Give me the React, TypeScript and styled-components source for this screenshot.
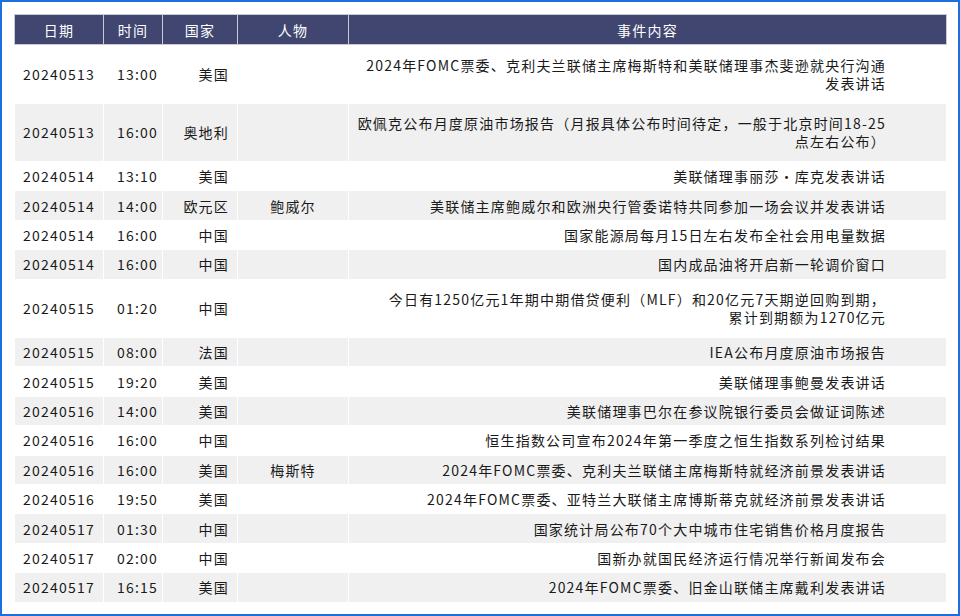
import React from "react";
import styled, { createGlobalStyle } from "styled-components";

const Global = createGlobalStyle`
  html, body { margin: 0; padding: 0; background: #fff; }
  body { font-family: "Noto Sans CJK SC", "Liberation Sans", sans-serif; }
`;

const Frame = styled.div`
  width: 960px;
  height: 616px;
  box-sizing: border-box;
  border: 2px solid #1c6fe0;
  padding: 12px 12px 0 12px;
  overflow: hidden;
`;

const Table = styled.table`
  width: 933px;
  border-collapse: collapse;
  table-layout: fixed;
  font-size: 14px;
  letter-spacing: 1.2px;
  color: #1a1a1a;
`;

const Th = styled.th<{ w?: number }>`
  background: #404670;
  color: #fff;
  font-weight: normal;
  height: 29px;
  padding: 0;
  border: 1px solid #c8cad6;
  text-align: center;
  ${(p) => (p.w ? `width: ${p.w}px;` : "")}
`;

const Tr = styled.tr<{ shade: boolean; tall?: boolean }>`
  background: ${(p) => (p.shade ? "#f0f0f0" : "#fff")};
  height: ${(p) => (p.tall ? "58.5px" : "29.4px")};
`;

const Td = styled.td<{ align: "left" | "center" | "right"; pr?: number }>`
  border: 1px solid #fff;
  padding: 0 ${(p) => p.pr ?? 0}px 0 0;
  text-align: ${(p) => p.align};
  vertical-align: middle;
  line-height: 18px;
  white-space: nowrap;
  overflow: hidden;
`;

const Event = styled.div`
  display: flex;
  justify-content: flex-end;
  padding-right: 60px;
`;

const EventText = styled.div`
  text-align: right;
  line-height: 18px;
`;

type Row = [string, string, string, string, string[]];

const rows: Row[] = [
  ["20240513", "13:00", "美国", "", ["2024年FOMC票委、克利夫兰联储主席梅斯特和美联储理事杰斐逊就央行沟通", "发表讲话"]],
  ["20240513", "16:00", "奥地利", "", ["欧佩克公布月度原油市场报告（月报具体公布时间待定，一般于北京时间18-25", "点左右公布）"]],
  ["20240514", "13:10", "美国", "", ["美联储理事丽莎·库克发表讲话"]],
  ["20240514", "14:00", "欧元区", "鲍威尔", ["美联储主席鲍威尔和欧洲央行管委诺特共同参加一场会议并发表讲话"]],
  ["20240514", "16:00", "中国", "", ["国家能源局每月15日左右发布全社会用电量数据"]],
  ["20240514", "16:00", "中国", "", ["国内成品油将开启新一轮调价窗口"]],
  ["20240515", "01:20", "中国", "", ["今日有1250亿元1年期中期借贷便利（MLF）和20亿元7天期逆回购到期，", "累计到期额为1270亿元"]],
  ["20240515", "08:00", "法国", "", ["IEA公布月度原油市场报告"]],
  ["20240515", "19:20", "美国", "", ["美联储理事鲍曼发表讲话"]],
  ["20240516", "14:00", "美国", "", ["美联储理事巴尔在参议院银行委员会做证词陈述"]],
  ["20240516", "16:00", "中国", "", ["恒生指数公司宣布2024年第一季度之恒生指数系列检讨结果"]],
  ["20240516", "16:00", "美国", "梅斯特", ["2024年FOMC票委、克利夫兰联储主席梅斯特就经济前景发表讲话"]],
  ["20240516", "19:50", "美国", "", ["2024年FOMC票委、亚特兰大联储主席博斯蒂克就经济前景发表讲话"]],
  ["20240517", "01:30", "中国", "", ["国家统计局公布70个大中城市住宅销售价格月度报告"]],
  ["20240517", "02:00", "中国", "", ["国新办就国民经济运行情况举行新闻发布会"]],
  ["20240517", "16:15", "美国", "", ["2024年FOMC票委、旧金山联储主席戴利发表讲话"]],
];

export default function App() {
  return (
    <>
      <Global />
      <Frame>
        <Table>
          <thead>
            <tr>
              <Th w={88}>日期</Th>
              <Th w={58}>时间</Th>
              <Th w={74}>国家</Th>
              <Th w={110}>人物</Th>
              <Th>事件内容</Th>
            </tr>
          </thead>
          <tbody>
            {rows.map((r, i) => (
              <Tr key={i} shade={i % 2 === 1} tall={r[4].length > 1}>
                <Td align="center">{r[0]}</Td>
                <Td align="right" pr={4}>{r[1]}</Td>
                <Td align="right" pr={8}>{r[2]}</Td>
                <Td align="center">{r[3]}</Td>
                <Td align="right">
                  <Event>
                    <EventText>
                      {r[4].map((l, j) => (
                        <div key={j}>{l}</div>
                      ))}
                    </EventText>
                  </Event>
                </Td>
              </Tr>
            ))}
          </tbody>
        </Table>
      </Frame>
    </>
  );
}
